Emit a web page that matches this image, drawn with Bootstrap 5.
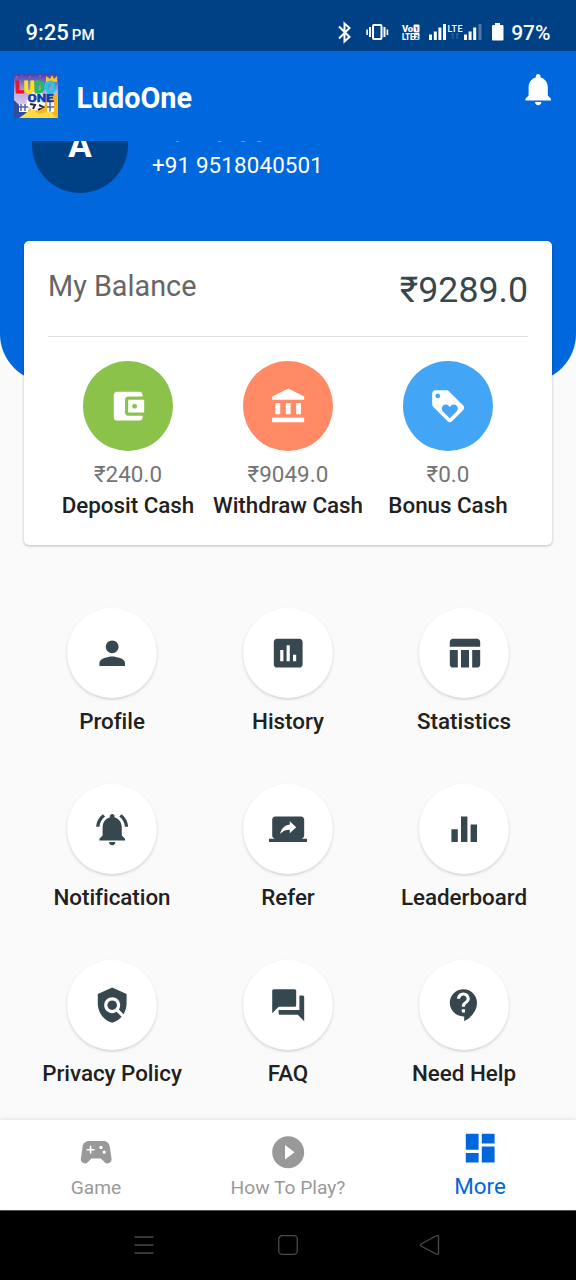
<!DOCTYPE html>
<html lang="en">
<head>
<meta charset="utf-8">
<meta name="viewport" content="width=device-width, initial-scale=1">
<title>LudoOne</title>
<link href="https://cdn.jsdelivr.net/npm/bootstrap@5.3.0/dist/css/bootstrap.min.css" rel="stylesheet">
<style>
body{font-family:Roboto,"Noto Sans",sans-serif;background:#fafafa;color:#212121;height:1280px;overflow:hidden;font-size:22.4px;line-height:26px}
svg{display:block;flex:none}
.ico{width:38.4px;height:38.4px;fill:currentColor}
.statusbar{height:51px;background:#004085;color:#fff;padding:14px 25.5px 0 25.5px}
.clock{font-size:22px;font-weight:500;letter-spacing:0;line-height:38px}
.clock span{font-size:15px;margin-left:3px}
.percent{font-size:21px;font-weight:500;line-height:38px}
.appbar{height:90px;background:#0067dd;color:#fff;padding:0 19px 0 14px}
.brand-name{font-size:28.8px;font-weight:700;line-height:34px;margin:3px 0 0 18.6px}
.bell{margin:0 -.6px 13.5px 0}
.scroller{height:979px;overflow:hidden}
.hero{height:240.5px;background:#0067dd;border-radius:0 0 48px 48px;padding:0 32px}
.avatar{width:96px;height:96px;background:#004085;color:#fff;font-size:35px;font-weight:700;margin-top:-44.5px;padding-top:3px}
.who{margin-left:24px;height:60px;font-size:22.4px;color:#fff;letter-spacing:.12px}
.balance{margin:-140.5px 24px 0;height:303.5px;border-radius:5px;border:0;box-shadow:0 1px 3px rgba(0,0,0,.26);padding:0 24px;position:relative}
.balance-head{height:96px;border-bottom:1.5px solid #e0e0e0}
.balance-title{font-size:28.8px;line-height:34px;color:#666;margin-top:28px}
.balance-sum{font-size:35.7px;line-height:42px;color:#37474f;margin-top:28px}
.disc{width:89.6px;height:89.6px;border-radius:50%;color:#fff}
.amount{color:#757575;margin:10.9px 0 4.5px;letter-spacing:.05px}
.cap{font-weight:500;white-space:nowrap;color:#212121;letter-spacing:-.03px}
.tiles{margin:63.5px 24px 0}
.tile{height:176px}
.tile .disc{background:#fff;color:#37474f;box-shadow:0 1.5px 3px rgba(0,0,0,.16);padding-top:.5px}
.tile .cap{margin-top:10.9px}
.tabs{height:90px;background:#fff;color:#999;box-shadow:0 0 5px rgba(0,0,0,.14);position:relative;font-size:19.2px}
.tab-item{padding-top:12.8px}
.tab-item div{margin-top:3.4px}
.tab-on{color:#0067dd;font-size:22.4px;padding-top:9.4px}
.tab-on div{margin-top:5px}
.sysbar{height:70px;background:#000;border-top:1px solid #555;padding-bottom:2px}
</style>
</head>
<body>
<div class="statusbar d-flex justify-content-between">
  <div class="clock">9:25<span>PM</span></div>
  <div class="d-flex">
    <svg width="174" height="37" viewBox="0 0 174 37" fill="#fff">
      <path d="M2 12.5 12.5 23 7.5 27.5V9.5L12.5 14 2 24.5" fill="none" stroke="#fff" stroke-width="2"/>
      <rect x="36" y="11" width="8.500" height="14" rx="1" fill="none" stroke="#fff" stroke-width="2"/>
      <path d="M32 13h2v10h-2zM29.300 15.500h1.600v5.500h-1.600zM46.500 13h2v10h-2zM49.600 15.500h1.600v5.500h-1.600z"/>
      <g font-family="Roboto,sans-serif" font-weight="900">
        <text x="65" y="17.500" font-size="9.500" textLength="11">Vo</text>
        <text x="65" y="25.500" font-size="9" textLength="12" lengthAdjust="spacingAndGlyphs">LTE</text>
        <rect x="76.500" y="10.500" width="6" height="7.500" rx="1"/><rect x="77" y="18.500" width="5.500" height="7.200" rx="1"/>
        <text x="77.800" y="17" font-size="6" fill="#004085">1</text><text x="78" y="24.500" font-size="6" fill="#004085">2</text>
      </g>
      <path d="M92 20.500h3V26h-3zM96.800 17.500h3V26h-3zM101.400 13.500h3V26h-3zM106 10h3v16h-3zM127 20.500h3V26h-3zM131.600 17.500h3V26h-3zM136.200 13.500h3V26h-3z"/>
      <path d="M141.500 10h3v16h-3z" fill="#4b78a8"/>
      <text x="110.500" y="17.500" font-family="Roboto,sans-serif" font-size="9" font-weight="500" textLength="15">LTE</text>
      <path d="M116 25v-6M114 21l2-2M120 19v6M122 20h-2" fill="none" stroke="#3f6b9c"/>
      <path d="M158 9h5v2h2.500q1 0 1 1v13.500q0 1-1 1h-9.500q-1 0-1-1V12q0-1 1-1h2z"/>
    </svg>
    <div class="percent">97%</div>
  </div>
</div>
<header class="appbar d-flex align-items-center">
  <svg width="44" height="44" viewBox="0 0 44 44">
    <defs><linearGradient id="sky" x2="0" y2="1"><stop stop-color="#4541af"/><stop offset=".45" stop-color="#c3b0e2"/><stop offset="1" stop-color="#f4e8f0"/></linearGradient></defs>
    <path d="M0 0h44v44H0z" fill="url(#sky)"/>
    <path d="M0 44 22 32l22-13v25z" fill="#f4b51f"/>
    <path d="M0 26 18 44H0z" fill="#314da0"/>
    <path d="M5 30h9v8H5zM33 28h7v10h-7z" fill="#fff"/>
    <path d="M7 30v7M11 30v7M5 33h9M36 28v10M33 33h7" stroke="#5361ad" stroke-width="1.500"/>
    <path d="M5 44 18 35l7 5 12-3 5 7z" fill="#ffda43"/>
    <circle cx="22" cy="27" r="9.500" fill="#fff"/>
    <path d="m16 30 5 1-2 4M25 31l4 2-5 3" stroke="#29283c" stroke-width="2" fill="none"/>
    <path d="m32 8 0-6 4 3 2-4 2 4 3-3v6z" fill="#f7c62c"/>
    <path d="M2 3h2M7 2h1M15 3h2M25 2h2" stroke="#ea667b"/>
    <g font-family="Roboto,sans-serif" font-weight="900">
      <text x="1.500" y="18.500" font-size="16" textLength="40" lengthAdjust="spacingAndGlyphs" stroke-width=".9"><tspan fill="#e71524" stroke="#e71524">L</tspan><tspan fill="#ffe022" stroke="#ffe022">U</tspan><tspan fill="#1dc24a" stroke="#1dc24a">D</tspan><tspan fill="#28c5e0" stroke="#28c5e0">O</tspan></text>
      <text x="13.500" y="27.500" font-size="11.500" fill="#113caa" stroke="#113caa" stroke-width=".4" textLength="26" lengthAdjust="spacingAndGlyphs">ONE</text>
    </g>
  </svg>
  <div class="brand-name">LudoOne</div>
  <svg class="ico bell ms-auto" viewBox="0 0 24 24"><path d="M12 22c1.100 0 2-.9 2-2h-4c0 1.100.89 2 2 2zm6-6v-5c0-3.070-1.640-5.640-4.500-6.320V4c0-.83-.67-1.500-1.500-1.500s-1.500.67-1.500 1.500v.68C7.630 5.360 6 7.920 6 11v5l-2 2v1h16v-1l-2-2z"/></svg>
</header>
<main class="scroller">
  <section class="hero d-flex align-items-start">
    <div class="avatar rounded-circle d-flex align-items-center justify-content-center"><span>A</span></div>
    <div class="who">
      <svg width="120" height="11" viewBox="0 0 120 11"><path d="M24 .5h3M66 .5h3M89 .5h4M105 .5h4" stroke="#5a9dea"/></svg>
      +91 9518040501
    </div>
  </section>
  <section class="card balance">
    <div class="balance-head d-flex justify-content-between align-items-start">
      <div class="balance-title">My Balance</div>
      <div class="balance-sum">₹9289.0</div>
    </div>
    <div class="row g-0 text-center pt-4">
      <div class="col-4 d-flex flex-column align-items-center">
        <div class="disc d-flex align-items-center justify-content-center" style="background:#8bc34a"><svg class="ico" viewBox="0 0 24 24"><path d="M21 18v1c0 1.100-.9 2-2 2H5c-1.110 0-2-.9-2-2V5c0-1.100.89-2 2-2h14c1.100 0 2 .9 2 2v1h-9c-1.110 0-2 .9-2 2v8c0 1.100.89 2 2 2h9zm-9-2h10V8H12v8zm4-2.500c-.83 0-1.500-.67-1.500-1.500s.67-1.500 1.500-1.500 1.500.67 1.500 1.500-.67 1.500-1.500 1.500z"/></svg></div>
        <div class="amount">₹240.0</div><div class="cap">Deposit Cash</div>
      </div>
      <div class="col-4 d-flex flex-column align-items-center">
        <div class="disc d-flex align-items-center justify-content-center" style="background:#ff8a65"><svg class="ico" viewBox="0 0 24 24"><path d="M4 10h3v7H4zM10.500 10h3v7h-3zM2 19h20v3H2zM17 10h3v7h-3zM12 1L2 6v2h20V6z"/></svg></div>
        <div class="amount">₹9049.0</div><div class="cap">Withdraw Cash</div>
      </div>
      <div class="col-4 d-flex flex-column align-items-center">
        <div class="disc d-flex align-items-center justify-content-center" style="background:#42a5f5"><svg class="ico" viewBox="0 0 24 24"><path d="M21.410 11.580l-9-9C12.050 2.220 11.550 2 11 2H4c-1.100 0-2 .9-2 2v7c0 .55.22 1.050.59 1.420l9 9c.36.36.86.58 1.410.58.55 0 1.050-.22 1.410-.59l7-7c.37-.36.59-.86.59-1.410 0-.55-.23-1.060-.59-1.420zM5.500 7C4.670 7 4 6.330 4 5.500S4.670 4 5.500 4 7 4.670 7 5.500 6.330 7 5.500 7zm11.770 8.270L13 19.540l-4.270-4.270C8.280 14.810 8 14.190 8 13.500c0-1.380 1.120-2.500 2.500-2.500.69 0 1.320.28 1.770.74l.73.72.73-.73c.45-.45 1.080-.73 1.770-.73 1.380 0 2.500 1.120 2.500 2.500 0 .69-.28 1.320-.73 1.770z"/></svg></div>
        <div class="amount">₹0.0</div><div class="cap">Bonus Cash</div>
      </div>
    </div>
  </section>
  <section class="tiles row g-0">
    <div class="tile col-4 d-flex flex-column align-items-center"><div class="disc d-flex align-items-center justify-content-center"><svg class="ico" viewBox="0 0 24 24"><path d="M12 12c2.210 0 4-1.790 4-4s-1.790-4-4-4-4 1.790-4 4 1.790 4 4 4zm0 2c-2.670 0-8 1.340-8 4v2h16v-2c0-2.660-5.330-4-8-4z"/></svg></div><div class="cap">Profile</div></div>
    <div class="tile col-4 d-flex flex-column align-items-center"><div class="disc d-flex align-items-center justify-content-center"><svg class="ico" viewBox="0 0 24 24"><path d="M19 3H5c-1.100 0-2 .9-2 2v14c0 1.100.9 2 2 2h14c1.100 0 2-.9 2-2V5c0-1.100-.9-2-2-2zM9 17H7v-7h2v7zm4 0h-2V7h2v10zm4 0h-2v-4h2v4z"/></svg></div><div class="cap">History</div></div>
    <div class="tile col-4 d-flex flex-column align-items-center"><div class="disc d-flex align-items-center justify-content-center"><svg class="ico" viewBox="0 0 24 24"><path d="M10 10.020h5V21h-5zM17 21h3c1.100 0 2-.9 2-2v-9h-5v11zm3-18H5c-1.100 0-2 .9-2 2v3h19V5c0-1.100-.9-2-2-2zM3 19c0 1.100.9 2 2 2h3V10H3v9z"/></svg></div><div class="cap">Statistics</div></div>
    <div class="tile col-4 d-flex flex-column align-items-center"><div class="disc d-flex align-items-center justify-content-center"><svg class="ico" viewBox="0 0 24 24"><path d="M7.580 4.080L6.150 2.650C3.750 4.480 2.170 7.300 2.030 10.500h2c.15-2.650 1.510-4.970 3.550-6.420zm12.390 6.420h2c-.15-3.200-1.730-6.020-4.120-7.850l-1.420 1.430c2.020 1.450 3.390 3.770 3.540 6.420zM18 11c0-3.070-1.640-5.640-4.500-6.320V4c0-.83-.67-1.500-1.500-1.500s-1.500.67-1.500 1.500v.68C7.630 5.360 6 7.920 6 11v5l-2 2v1h16v-1l-2-2v-5zm-6 11c.14 0 .27-.01.4-.04.65-.14 1.180-.58 1.440-1.180.1-.24.15-.5.15-.78h-4c.01 1.100.9 2 2.010 2z"/></svg></div><div class="cap">Notification</div></div>
    <div class="tile col-4 d-flex flex-column align-items-center"><div class="disc d-flex align-items-center justify-content-center"><svg class="ico" viewBox="0 0 24 24"><path d="M20 18c1.100 0 1.990-.9 1.990-2L22 6c0-1.110-.9-2-2-2H4c-1.110 0-2 .89-2 2v10c0 1.100.89 2 2 2H0v2h24v-2h-4zm-7-3.530v-2.190c-2.780 0-4.610.85-6 2.720.56-2.670 2.110-5.330 6-5.870V7l4 3.730-4 3.740z"/></svg></div><div class="cap">Refer</div></div>
    <div class="tile col-4 d-flex flex-column align-items-center"><div class="disc d-flex align-items-center justify-content-center"><svg class="ico" viewBox="0 0 24 24"><path d="M10 20h4V4h-4v16zm-6 0h4v-8H4v8zM16 9v11h4V9h-4z"/></svg></div><div class="cap">Leaderboard</div></div>
    <div class="tile col-4 d-flex flex-column align-items-center"><div class="disc d-flex align-items-center justify-content-center"><svg class="ico" viewBox="0 0 24 24"><path d="M21 5l-9-4-9 4v6c0 5.550 3.840 10.740 9 12 2.300-.56 4.330-1.900 5.880-3.710l-3.120-3.120c-1.940 1.290-4.580 1.070-6.290-.64-1.950-1.950-1.950-5.120 0-7.070 1.950-1.950 5.120-1.950 7.070 0 1.710 1.710 1.920 4.350.64 6.290l2.900 2.900C20.290 15.690 21 13.380 21 11V5z"/><circle cx="12" cy="12" r="3"/></svg></div><div class="cap">Privacy Policy</div></div>
    <div class="tile col-4 d-flex flex-column align-items-center"><div class="disc d-flex align-items-center justify-content-center"><svg class="ico" viewBox="0 0 24 24"><path d="M21 6h-2v9H6v2c0 .55.45 1 1 1h11l4 4V7c0-.55-.45-1-1-1zm-4 6V3c0-.55-.45-1-1-1H3c-.55 0-1 .45-1 1v14l4-4h10c.55 0 1-.45 1-1z"/></svg></div><div class="cap">FAQ</div></div>
    <div class="tile col-4 d-flex flex-column align-items-center"><div class="disc d-flex align-items-center justify-content-center"><svg class="ico" viewBox="0 0 24 24"><path d="M11.500 2C6.810 2 3 5.810 3 10.500S6.810 19 11.500 19h.5v3c4.860-2.340 8-7 8-11.500C20 5.810 16.190 2 11.500 2zm1 14.500h-2v-2h2v2zm0-3.500h-2c0-3.250 3-3 3-5 0-1.100-.9-2-2-2s-2 .9-2 2h-2c0-2.210 1.790-4 4-4s4 1.790 4 4c0 2.500-3 2.750-3 5z"/></svg></div><div class="cap">Need Help</div></div>
  </section>
</main>
<nav class="tabs row g-0 text-center">
  <div class="tab-item col-4 d-flex flex-column align-items-center"><svg class="ico" viewBox="0 0 24 24"><path d="M21.580 16.090l-1.090-7.660C20.210 6.460 18.520 5 16.530 5H7.470C5.480 5 3.790 6.460 3.510 8.430l-1.090 7.660C2.200 17.630 3.390 19 4.940 19c.68 0 1.320-.27 1.800-.75L9 16h6l2.250 2.250c.48.48 1.130.75 1.800.75 1.560 0 2.750-1.370 2.530-2.910zM11 11H9v2H8v-2H6v-1h2V8h1v2h2v1zm4-1c-.55 0-1-.45-1-1s.45-1 1-1 1 .45 1 1-.45 1-1 1zm2 3c-.55 0-1-.45-1-1s.45-1 1-1 1 .45 1 1-.45 1-1 1z"/></svg><div>Game</div></div>
  <div class="tab-item col-4 d-flex flex-column align-items-center"><svg class="ico" viewBox="0 0 24 24"><path d="M12 2C6.480 2 2 6.480 2 12s4.480 10 10 10 10-4.480 10-10S17.520 2 12 2zm-2 14.500v-9l6 4.500-6 4.500z"/></svg><div>How To Play?</div></div>
  <div class="tab-item tab-on col-4 d-flex flex-column align-items-center"><svg class="ico" viewBox="0 0 24 24"><path d="M3 13h8V3H3v10zm0 8h8v-6H3v6zm10 0h8V11h-8v10zm0-18v6h8V3h-8z"/></svg><div>More</div></div>
</nav>
<div class="sysbar d-flex justify-content-center align-items-center">
  <svg width="308" height="22" viewBox="0 0 308 22" fill="none" stroke="#4a4a4a" stroke-width="1.300">
    <path d="M.5 3h19M.5 11h19M.5 19h19"/>
    <rect x="144.700" y="1.700" width="18.600" height="18.600" rx="3.500"/>
    <path d="M287.500 9.700 302 2q2.500-1 2.500 1.500v15q0 2.500-2.500 1.500l-14.500-7.700q-1.500-1.300 0-2.600z"/>
  </svg>
</div>
<script src="https://cdn.jsdelivr.net/npm/bootstrap@5.3.0/dist/js/bootstrap.bundle.min.js"></script>
</body>
</html>
